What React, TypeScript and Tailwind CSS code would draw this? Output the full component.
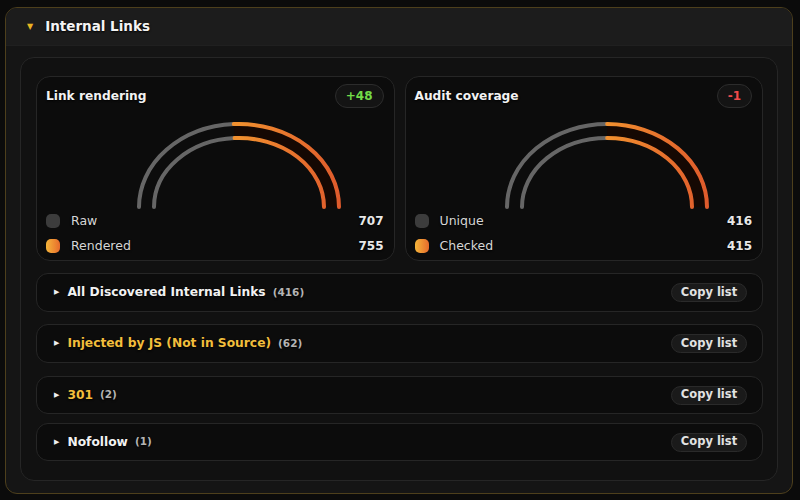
import React from 'react';

type Gauge = {
  title: string;
  delta: string;
  deltaTone: 'up' | 'down';
  a: { label: string; value: number };
  b: { label: string; value: number };
};

const gauges: Gauge[] = [
  { title: 'Link rendering', delta: '+48', deltaTone: 'up', a: { label: 'Raw', value: 707 }, b: { label: 'Rendered', value: 755 } },
  { title: 'Audit coverage', delta: '-1', deltaTone: 'down', a: { label: 'Unique', value: 416 }, b: { label: 'Checked', value: 415 } },
];

const sections = [
  { title: 'All Discovered Internal Links', count: 416, accent: false, gap: 'mt-[12px]', h: 'h-[39px]' },
  { title: 'Injected by JS (Not in Source)', count: 62, accent: true, gap: 'mt-[12px]', h: 'h-[39px]' },
  { title: '301', count: 2, accent: true, gap: 'mt-[13px]', h: 'h-[38px]' },
  { title: 'Nofollow', count: 1, accent: false, gap: 'mt-[9px]', h: 'h-[38px]' },
];

const shadow = '[text-shadow:0_1px_2px_rgba(0,0,0,0.95)]';

function Arc({ id, frac }: { id: string; frac: number }) {
  const cx = 110;
  const cy = 87;
  const ring = (rx: number, ry: number) => {
    const t = Math.PI * frac;
    return {
      l: [cx - rx, cy],
      r: [cx + rx, cy],
      s: [cx - rx * Math.cos(t), cy - ry * Math.sin(t)],
      rx,
      ry,
    };
  };
  const o = ring(100, 83);
  const i = ring(85, 69);
  const grayPath = (g: typeof o) => `M${g.l[0]} ${g.l[1]} A${g.rx} ${g.ry} 0 0 1 ${g.s[0]} ${g.s[1]}`;
  const orangePath = (g: typeof o) => `M${g.s[0]} ${g.s[1]} A${g.rx} ${g.ry} 0 0 1 ${g.r[0]} ${g.r[1]}`;
  const band = `M${o.s[0]} ${o.s[1]} A${o.rx} ${o.ry} 0 0 1 ${o.r[0]} ${o.r[1]} L${i.r[0]} ${i.r[1]} A${i.rx} ${i.ry} 0 0 0 ${i.s[0]} ${i.s[1]} Z`;

  return (
    <svg width="220" height="90" viewBox="0 0 220 90">
      <defs>
        <linearGradient id={id} x1="110" y1="0" x2="212" y2="0" gradientUnits="userSpaceOnUse">
          <stop offset="0" stopColor="#f1902f" />
          <stop offset="1" stopColor="#df5a2c" />
        </linearGradient>
      </defs>
      <path d={band} fill="#150803" />
      <path d={grayPath(o)} fill="none" stroke="#666666" strokeWidth="4" strokeLinecap="round" />
      <path d={grayPath(i)} fill="none" stroke="#666666" strokeWidth="4" strokeLinecap="round" />
      <path d={orangePath(o)} fill="none" stroke={`url(#${id})`} strokeWidth="4" strokeLinecap="round" />
      <path d={orangePath(i)} fill="none" stroke={`url(#${id})`} strokeWidth="4" strokeLinecap="round" />
    </svg>
  );
}

function GaugeCard({ g, idx }: { g: Gauge; idx: number }) {
  const frac = g.a.value / (g.a.value + g.b.value);
  return (
    <div className="h-[185px] flex flex-col rounded-[14px] border border-[#262626] bg-[#0c0c0c] pt-[7px] pl-[9px] pr-[10px] pb-[6px]">
      <div className="flex items-center justify-between h-6">
        <span className={`text-[12.2px] font-bold text-[#f2f2f2] ${shadow}`}>{g.title}</span>
        <span
          className={`h-6 px-[10px] flex items-center rounded-full border border-[#2c2c2c] bg-[#141414] text-[12px] font-bold ${
            g.deltaTone === 'up' ? 'text-[#72dc48]' : 'text-[#f04b4b]'
          }`}
        >
          {g.delta}
        </span>
      </div>
      <div className="mt-[12px] flex justify-center pl-[48px]">
        <Arc id={`grad-${idx}`} frac={frac} />
      </div>
      <div className="mt-auto flex flex-col gap-[3px]">
        {[g.a, g.b].map((row, k) => (
          <div key={row.label} className="h-[22px] flex items-center">
            <span
              className={`w-[14px] h-[14px] rounded-[5px] ${
                k === 0 ? 'bg-[#3c3c3c]' : 'bg-linear-to-r from-[#f4b53a] to-[#e66a2c]'
              }`}
            />
            <span className={`ml-[11px] text-[12.5px] text-[#d6d6d6] ${shadow}`}>{row.label}</span>
            <span className={`ml-auto text-[12px] font-bold text-[#e8e8e8] ${shadow}`}>{row.value}</span>
          </div>
        ))}
      </div>
    </div>
  );
}

export default function App() {
  return (
    <div className="w-[800px] h-[500px] bg-[#0b0b0b] pt-[7px] pl-[5px] pr-[7px] pb-[6px] font-['DejaVu_Sans',sans-serif]">
      <div className="h-full rounded-[12px] border border-[#4d3f1c] bg-[#151515] overflow-hidden flex flex-col">
        {/* Header */}
        <div className="h-[38px] shrink-0 flex items-center bg-[#1c1c1c] border-b border-[#202020] pl-[21px]">
          <span className="text-[8px] leading-none text-[#e9b422]">▼</span>
          <span className={`ml-[12px] text-[13.5px] font-bold text-[#f4f4f4] ${shadow}`}>Internal Links</span>
        </div>

        {/* Body */}
        <div className="flex-1 px-[14px] pt-[11px] pb-[12px]">
          <div className="h-full rounded-[14px] border border-[#262626] bg-[#111111] pt-[18px] pl-[15px] pr-[14px] pb-[18px] flex flex-col">
            <div className="grid grid-cols-2 gap-[10px]">
              {gauges.map((g, i) => (
                <GaugeCard key={g.title} g={g} idx={i} />
              ))}
            </div>

            {sections.map((s) => (
              <div
                key={s.title}
                className={`${s.gap} ${s.h} shrink-0 flex items-center rounded-[12px] border border-[#262626] bg-[#0c0c0c] pl-[17px] pr-[15px]`}
              >
                <span className="text-[7px] leading-none text-[#f0f0f0]">▶</span>
                <span
                  className={`ml-[8px] text-[12.25px] font-bold ${shadow} ${
                    s.accent ? 'text-[#f2be3c]' : 'text-[#f2f2f2]'
                  }`}
                >
                  {s.title}
                </span>
                <span className={`ml-[7px] text-[10.5px] font-semibold text-[#b4b4b4] ${shadow}`}>({s.count})</span>
                <button className="ml-auto h-[19px] w-[76px] rounded-full border border-[#2a2a2a] bg-[#1a1a1a] text-[11.5px] font-bold text-[#e2e2e2] flex items-center justify-center">
                  Copy list
                </button>
              </div>
            ))}
          </div>
        </div>
      </div>
    </div>
  );
}
